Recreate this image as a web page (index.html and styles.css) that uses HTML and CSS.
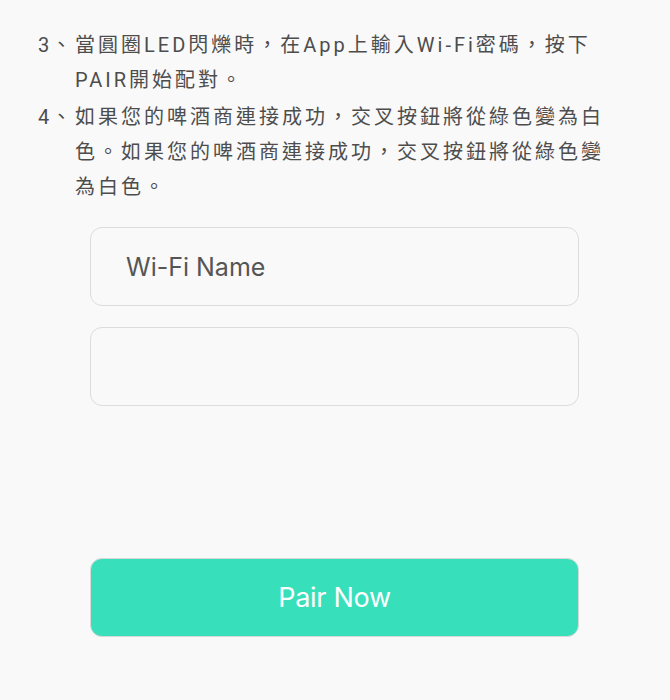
FILE: index.html
```html
<!DOCTYPE html>
<html lang="zh-Hant">
<head>
<meta charset="utf-8">
<link rel="stylesheet" href="styles.css">
</head>
<body>
<main class="page">
  <ol class="steps">
    <li class="step"><span class="num">3、</span><span class="txt">當圓圈LED閃爍時，在App上輸入Wi-Fi密碼，按下PAIR開始配對。</span></li>
    <li class="step"><span class="num">4、</span><span class="txt">如果您的啤酒商連接成功，交叉按鈕將從綠色變為白色。如果您的啤酒商連接成功，交叉按鈕將從綠色變為白色。</span></li>
  </ol>
  <form class="form">
    <input class="field" type="text" placeholder="Wi-Fi Name">
    <input class="field" type="password">
    <button class="pair" type="button">Pair Now</button>
  </form>
</main>
</body>
</html>
```

FILE: styles.css
```css
html, body {
  margin: 0;
  padding: 0;
  background: #f9f9f9;
}
.page {
  width: 670px;
  height: 700px;
  box-sizing: border-box;
  padding-top: 28px;
  font-family: Roboto, "Noto Sans CJK TC", sans-serif;
}
.steps {
  list-style: none;
  margin: 0;
  padding: 0 50px 0 38px;
  display: flex;
  flex-direction: column;
  gap: 2px;
}
.step {
  display: flex;
  font-size: 20px;
  line-height: 35px;
  color: #4d4d4d;
  letter-spacing: 3px;
}
.num {
  flex: 0 0 37px;
  white-space: nowrap;
  letter-spacing: 2px;
}
.txt {
  flex: 1;
}
.form {
  margin: 22px 91px 0 90px;
  display: flex;
  flex-direction: column;
}
.field {
  height: 79px;
  box-sizing: border-box;
  border: 1px solid #dcdcdc;
  border-radius: 12px;
  background: #f9f9f9;
  padding: 0 0 0 35px;
  font-family: Inter, Roboto, sans-serif;
  font-size: 25px;
  letter-spacing: 0;
  color: #555;
  outline: none;
  margin: 0 0 21px;
}
.field::placeholder {
  color: #555;
}
.pair {
  margin-top: 131px;
  height: 79px;
  border: 1px solid #d8d8d8;
  border-radius: 12px;
  background: #37e0bb;
  color: #fff;
  font-family: Inter, Roboto, sans-serif;
  font-size: 27px;
  letter-spacing: -0.3px;
  cursor: pointer;
}
```
